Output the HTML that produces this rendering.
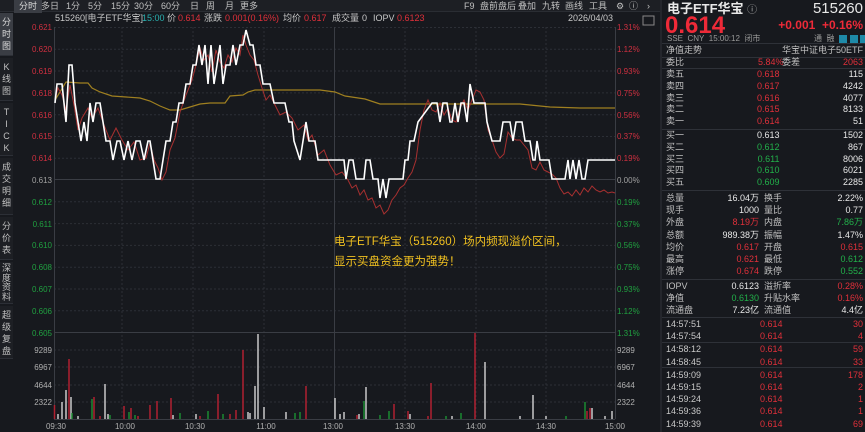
<!DOCTYPE html>
<html><head><meta charset="utf-8"><style>
*{margin:0;padding:0;box-sizing:border-box}
body{width:865px;height:432px;background:#17191e;overflow:hidden;position:relative;font-family:"Liberation Sans","Noto Sans CJK SC",sans-serif;color:#c8c8c8;line-height:1.2}
.a{position:absolute;white-space:nowrap}
.r{color:#e0303a}.g{color:#22b04a}.w{color:#e8e8e8}.gr{color:#9a9a9a}
#side div{position:absolute;left:0;width:13px;background:#1d1f24;border-bottom:1px solid #2c2f36;font-size:9px;line-height:12px;text-align:center;color:#c0c0c0;padding-top:3px;overflow:hidden}
#tb span{position:absolute;top:1px;font-size:9px;color:#c0c0c0}
#rp{position:absolute;left:662px;top:0;width:203px;height:432px;font-size:9px}
.ln{position:absolute;left:662px;width:203px;height:1px;background:#2e3138}
</style></head><body>
<div class="a" style="left:0;top:0;width:660px;height:12px;background:#1d1f24;border-bottom:1px solid #2a2d33"></div>
<div id="tb">
<span style="left:14px;top:0;background:#3a3d44;padding:1px 5px;color:#ddd">分时</span>
<span style="left:41px">多日</span><span style="left:66px">1分</span><span style="left:88px">5分</span><span style="left:111px">15分</span><span style="left:134px">30分</span><span style="left:161px">60分</span><span style="left:190px">日</span><span style="left:206px">周</span><span style="left:225px">月</span><span style="left:240px">更多</span>
<span style="left:464px">F9</span><span style="left:480px">盘前盘后</span><span style="left:518px">叠加</span><span style="left:542px">九转</span><span style="left:565px">画线</span><span style="left:589px">工具</span><span style="left:616px">⚙</span><span style="left:629px">ⓘ</span><span style="left:647px">›</span>
</div>
<div id="side">
<div style="top:13px;height:43px;background:#3a3d44;color:#ddd">分<br>时<br>图</div>
<div style="top:58px;height:43px">K<br>线<br>图</div>
<div style="top:103px;height:53px">T<br>I<br>C<br>K</div>
<div style="top:158px;height:57px">成<br>交<br>明<br>细</div>
<div style="top:217px;height:43px">分<br>价<br>表</div>
<div style="top:262px;height:42px;line-height:9.5px;padding-top:2px">深<br>度<br>资<br>料</div>
<div style="top:306px;height:53px">超<br>级<br>复<br>盘</div>
</div>
<svg class="a" style="left:0;top:0" width="660" height="432" font-family="Liberation Sans,Noto Sans CJK SC,sans-serif">
<g font-size="9">
<text x="55" y="21" fill="#c8c8c8">515260[电子ETF华宝]</text>
<text x="142" y="21" fill="#2ab0b0">15:00</text>
<text x="167" y="21" fill="#c8c8c8">价</text><text x="178" y="21" fill="#e0303a">0.614</text>
<text x="204" y="21" fill="#c8c8c8">涨跌</text><text x="225" y="21" fill="#e0303a">0.001(0.16%)</text>
<text x="283" y="21" fill="#c8c8c8">均价</text><text x="304" y="21" fill="#e0303a">0.617</text>
<text x="332" y="21" fill="#c8c8c8">成交量</text><text x="362" y="21" fill="#c8c8c8">0</text>
<text x="373" y="21" fill="#c8c8c8">IOPV</text><text x="397" y="21" fill="#e0303a">0.6123</text>
<text x="613" y="21" fill="#c8c8c8" text-anchor="end">2026/04/03</text>
</g>
<rect x="643" y="16" width="11" height="9" fill="none" stroke="#888" stroke-width="1"/>
<g stroke="#2c2f36" stroke-dasharray="2,2" stroke-width="1">
<line x1="54" x2="615" y1="27.5" y2="27.5"/><line x1="54" x2="615" y1="49.3" y2="49.3"/><line x1="54" x2="615" y1="71" y2="71"/><line x1="54" x2="615" y1="92.9" y2="92.9"/><line x1="54" x2="615" y1="114.7" y2="114.7"/><line x1="54" x2="615" y1="136.5" y2="136.5"/><line x1="54" x2="615" y1="158.2" y2="158.2"/>
<line x1="54" x2="615" y1="201.8" y2="201.8"/><line x1="54" x2="615" y1="223.6" y2="223.6"/><line x1="54" x2="615" y1="245.4" y2="245.4"/><line x1="54" x2="615" y1="267.2" y2="267.2"/><line x1="54" x2="615" y1="289" y2="289"/><line x1="54" x2="615" y1="310.8" y2="310.8"/>
<line x1="54" x2="615" y1="350" y2="350"/><line x1="54" x2="615" y1="367" y2="367"/><line x1="54" x2="615" y1="385" y2="385"/><line x1="54" x2="615" y1="402" y2="402"/>
<line x1="122" x2="122" y1="27" y2="419"/><line x1="193" x2="193" y1="27" y2="419"/><line x1="264" x2="264" y1="27" y2="419"/><line x1="405" x2="405" y1="27" y2="419"/><line x1="476" x2="476" y1="27" y2="419"/><line x1="546" x2="546" y1="27" y2="419"/>
</g>
<g stroke="#3a3d44" stroke-width="1">
<line x1="54" x2="615" y1="179.5" y2="179.5"/><line x1="54" x2="615" y1="332.5" y2="332.5"/>
<line x1="334.5" x2="334.5" y1="27" y2="419"/><line x1="54.5" x2="54.5" y1="27" y2="419"/><line x1="615.5" x2="615.5" y1="27" y2="419"/>
<line x1="54" x2="615" y1="419.5" y2="419.5"/>
</g>
<g font-size="8" text-anchor="end">
<text x="52" y="30" fill="#d03040">0.621</text><text x="52" y="52" fill="#d03040">0.620</text><text x="52" y="74" fill="#d03040">0.619</text><text x="52" y="96" fill="#d03040">0.618</text><text x="52" y="118" fill="#d03040">0.616</text><text x="52" y="139" fill="#d03040">0.615</text><text x="52" y="161" fill="#d03040">0.614</text><text x="52" y="183" fill="#a0a0a0">0.613</text>
<text x="52" y="205" fill="#20a040">0.612</text><text x="52" y="227" fill="#20a040">0.611</text><text x="52" y="248" fill="#20a040">0.610</text><text x="52" y="270" fill="#20a040">0.608</text><text x="52" y="292" fill="#20a040">0.607</text><text x="52" y="314" fill="#20a040">0.606</text><text x="52" y="336" fill="#20a040">0.605</text>
<text x="52" y="353" fill="#b0b0b0">9289</text><text x="52" y="370" fill="#b0b0b0">6967</text><text x="52" y="388" fill="#b0b0b0">4644</text><text x="52" y="405" fill="#b0b0b0">2322</text>
</g>
<g font-size="8">
<text x="617" y="30" fill="#d03040">1.31%</text><text x="617" y="52" fill="#d03040">1.12%</text><text x="617" y="74" fill="#d03040">0.93%</text><text x="617" y="96" fill="#d03040">0.75%</text><text x="617" y="118" fill="#d03040">0.56%</text><text x="617" y="139" fill="#d03040">0.37%</text><text x="617" y="161" fill="#d03040">0.19%</text><text x="617" y="183" fill="#a0a0a0">0.00%</text>
<text x="617" y="205" fill="#20a040">0.19%</text><text x="617" y="227" fill="#20a040">0.37%</text><text x="617" y="248" fill="#20a040">0.56%</text><text x="617" y="270" fill="#20a040">0.75%</text><text x="617" y="292" fill="#20a040">0.93%</text><text x="617" y="314" fill="#20a040">1.12%</text><text x="617" y="336" fill="#20a040">1.31%</text>
<text x="617" y="353" fill="#b0b0b0">9289</text><text x="617" y="370" fill="#b0b0b0">6967</text><text x="617" y="388" fill="#b0b0b0">4644</text><text x="617" y="405" fill="#b0b0b0">2322</text>
</g>
<g font-size="8" fill="#b0b0b0" text-anchor="middle">
<text x="56" y="429">09:30</text><text x="125" y="429">10:00</text><text x="195" y="429">10:30</text><text x="266" y="429">11:00</text><text x="333" y="429">13:00</text><text x="405" y="429">13:30</text><text x="476" y="429">14:00</text><text x="546" y="429">14:30</text><text x="615" y="429">15:00</text>
</g>
<polyline fill="none" stroke="#a08020" stroke-width="1.2" points="55,100 60,92 66,82 80,83 88,83 92,88 100,92 112,96 140,98 150,101 160,106 170,110 180,110 190,107 200,104 210,103 225,103 230,96 243,95 248,92 255,90 300,90 320,90 335,92 345,96 365,99 380,104 410,104 420,104 480,104 520,104 550,107 580,108 615,108"/>
<polyline fill="none" stroke="#a83030" stroke-width="1" points="55,100 58,88 62,95 66,110 70,85 74,105 78,130 82,118 88,108 92,118 98,108 104,125 110,140 116,128 122,140 128,150 134,142 140,160 146,158 150,143 154,160 158,168 162,180 166,172 170,150 175,138 180,112 186,95 192,80 196,65 200,48 204,60 208,55 212,72 216,50 220,62 224,68 228,55 232,62 236,48 240,55 243,35 246,45 250,55 254,60 258,75 262,88 266,100 270,95 275,105 280,115 286,112 292,118 298,130 304,125 308,140 312,135 318,155 324,150 330,165 336,175 342,172 348,180 352,188 356,185 360,195 364,190 368,200 372,198 376,208 380,205 384,214 388,210 392,200 396,195 400,188 404,185 408,178 412,172 416,160 420,130 424,110 428,100 432,110 436,112 440,103 444,115 448,108 452,120 456,122 460,108 464,100 468,110 472,100 476,90 480,92 484,100 488,130 492,140 496,152 500,158 504,154 508,132 512,138 516,140 520,140 524,145 528,150 532,168 536,170 540,162 544,170 548,172 552,174 556,178 560,188 564,194 568,192 572,196 576,190 580,195 584,188 588,192 592,186 596,190 600,192 604,190 608,193 612,192 615,193"/>
<polyline fill="none" stroke="#ffffff" stroke-width="1.6" stroke-linejoin="miter" points="55,103 57,84 62,84 64,103 66,122 69,65 72,65 75,103 78,122 81,141 84,122 87,141 90,103 93,122 96,103 100,103 103,122 106,141 110,141 113,160 117,141 120,141 124,160 128,141 132,160 136,141 140,141 144,160 148,141 150,141 153,160 156,179 160,179 163,160 166,141 170,141 173,122 176,122 179,103 183,103 186,84 190,84 193,65 196,65 199,45 202,65 205,45 208,84 211,45 214,84 217,65 220,45 223,84 226,65 230,65 233,45 236,65 240,45 243,45 246,30 250,45 253,45 256,65 260,65 263,84 270,84 274,103 285,103 289,122 292,122 294,141 300,160 303,141 306,122 309,141 315,141 318,160 320,160 322,160 330,160 335,160 344,160 346,179 349,160 353,160 356,179 364,179 366,160 370,160 373,179 378,179 380,198 383,179 386,198 389,179 403,179 405,160 408,160 410,141 414,141 418,122 432,103 437,103 440,122 443,103 447,103 450,122 452,122 455,103 458,122 461,103 464,103 467,122 470,84 474,103 485,103 487,122 492,141 500,141 503,122 510,122 513,141 516,122 522,122 525,141 530,141 533,160 535,160 537,141 540,160 545,160 549,160 552,179 565,179 568,160 570,179 573,160 576,179 579,160 582,179 585,179 588,160 615,160"/>
<g stroke-width="1.5">
<g stroke="#b02030"><line x1="54.5" x2="54.5" y1="419" y2="405"/><line x1="69" x2="69" y1="419" y2="359"/><line x1="94" x2="94" y1="419" y2="397"/><line x1="124" x2="124" y1="419" y2="406"/><line x1="131" x2="131" y1="419" y2="408"/><line x1="150" x2="150" y1="419" y2="405"/><line x1="157" x2="157" y1="419" y2="401"/><line x1="171" x2="171" y1="419" y2="398"/><line x1="218" x2="218" y1="419" y2="394"/><line x1="236" x2="236" y1="419" y2="410"/><line x1="243" x2="243" y1="419" y2="350"/><line x1="306" x2="306" y1="419" y2="386"/><line x1="394" x2="394" y1="419" y2="404"/><line x1="408" x2="408" y1="419" y2="411"/><line x1="431" x2="431" y1="419" y2="383"/><line x1="475" x2="475" y1="419" y2="333"/><line x1="587" x2="587" y1="419" y2="411"/><line x1="590" x2="590" y1="419" y2="408"/><line x1="100" x2="100" y1="419" y2="416"/><line x1="138" x2="138" y1="419" y2="416"/><line x1="200" x2="200" y1="419" y2="416"/><line x1="230" x2="230" y1="419" y2="414"/><line x1="357" x2="357" y1="419" y2="415"/><line x1="428" x2="428" y1="419" y2="416"/></g>
<g stroke="#c8c8c8"><line x1="58" x2="58" y1="419" y2="414"/><line x1="62" x2="62" y1="419" y2="402"/><line x1="66" x2="66" y1="419" y2="390"/><line x1="71" x2="71" y1="419" y2="397"/><line x1="78" x2="78" y1="419" y2="416"/><line x1="105" x2="105" y1="419" y2="384"/><line x1="108" x2="108" y1="419" y2="414"/><line x1="173" x2="173" y1="419" y2="415"/><line x1="196" x2="196" y1="419" y2="414"/><line x1="248" x2="248" y1="419" y2="412"/><line x1="250" x2="250" y1="419" y2="413"/><line x1="255" x2="255" y1="419" y2="386"/><line x1="258" x2="258" y1="419" y2="334"/><line x1="264" x2="264" y1="419" y2="407"/><line x1="286" x2="286" y1="419" y2="412"/><line x1="335" x2="335" y1="419" y2="398"/><line x1="340" x2="340" y1="419" y2="414"/><line x1="344" x2="344" y1="419" y2="412"/><line x1="359" x2="359" y1="419" y2="414"/><line x1="366" x2="366" y1="419" y2="387"/><line x1="410" x2="410" y1="419" y2="414"/><line x1="452" x2="452" y1="419" y2="416"/><line x1="485" x2="485" y1="419" y2="362"/><line x1="533" x2="533" y1="419" y2="395"/><line x1="520" x2="520" y1="419" y2="416"/><line x1="546" x2="546" y1="419" y2="416"/><line x1="592" x2="592" y1="419" y2="408"/><line x1="605" x2="605" y1="419" y2="416"/><line x1="612" x2="612" y1="419" y2="411"/></g>
<g stroke="#1a8a30"><line x1="72" x2="72" y1="419" y2="413"/><line x1="92" x2="92" y1="419" y2="399"/><line x1="110" x2="110" y1="419" y2="415"/><line x1="129" x2="129" y1="419" y2="412"/><line x1="135" x2="135" y1="419" y2="415"/><line x1="180" x2="180" y1="419" y2="413"/><line x1="208" x2="208" y1="419" y2="411"/><line x1="223" x2="223" y1="419" y2="414"/><line x1="295" x2="295" y1="419" y2="413"/><line x1="300" x2="300" y1="419" y2="412"/><line x1="364" x2="364" y1="419" y2="401"/><line x1="380" x2="380" y1="419" y2="415"/><line x1="389" x2="389" y1="419" y2="411"/><line x1="446" x2="446" y1="419" y2="416"/><line x1="461" x2="461" y1="419" y2="413"/><line x1="566" x2="566" y1="419" y2="416"/><line x1="585" x2="585" y1="419" y2="402"/></g>
</g>
<g font-size="11.5" fill="#f0c020"><text x="334" y="245">电子ETF华宝（515260）场内频现溢价区间，</text><text x="334" y="265">显示买盘资金更为强势！</text></g>
</svg>
<div class="a" style="left:660px;top:0;width:2px;height:432px;background:#24262c"></div>
<div id="rp">
<div class="a w" style="left:5px;top:2px;font-size:13px;line-height:14px;font-weight:bold">电子ETF华宝 <span style="font-weight:normal;font-size:10px;color:#aaa">ⓘ</span></div>
<div class="a w" style="right:2px;top:1px;font-size:15px;line-height:16px">515260</div>
<div class="a" style="left:3px;top:17px;font-size:24px;line-height:18px;font-weight:bold;color:#ee2a38">0.614</div>
<div class="a" style="right:2px;top:18px;font-size:12px;line-height:14px;font-weight:bold;color:#ee2a38">+0.001&nbsp; +0.16%</div>
<div class="a gr" style="left:5px;top:34px;font-size:8px;line-height:9px">SSE&nbsp; CNY&nbsp; 15:00:12&nbsp; 闭市</div>
<div class="a gr" style="left:152px;top:34px;font-size:8px;line-height:9px">通&nbsp; 融</div>
<div class="a" style="left:177px;top:35px;width:8px;height:8px;background:#1e8aa8"></div><div class="a" style="left:188px;top:35px;width:8px;height:8px;background:#1e8aa8"></div><div class="a" style="left:198px;top:35px;width:8px;height:8px;background:#1e8aa8"></div>
</div>
<div class="ln" style="top:43px"></div>
<div class="a gr" style="left:666px;top:45px;font-size:9px;color:#c0c0c0">净值走势</div><div class="a" style="right:2px;top:45px;font-size:9px;color:#c0c0c0">华宝中证电子50ETF</div>
<div class="ln" style="top:57px"></div>
<div class="a" style="left:666px;top:57px;width:199px;font-size:9px;line-height:11px"><span style="color:#c0c0c0">委比</span><span class="a r" style="left:92px">5.84%</span><span class="a" style="left:116px;color:#c0c0c0">委差</span><span class="a r" style="right:2px">2063</span></div>
<div class="ln" style="top:68px"></div>
<div class="a" style="left:666px;top:69px;width:199px;font-size:9px;line-height:11.8px;color:#c0c0c0">
卖五<br>卖四<br>卖三<br>卖二<br>卖一</div>
<div class="a r" style="left:757px;top:69px;font-size:9px;line-height:11.8px;text-align:right">0.618<br>0.617<br>0.616<br>0.615<br>0.614</div>
<div class="a w" style="right:2px;top:69px;font-size:9px;line-height:11.8px;text-align:right">115<br>4242<br>4077<br>8133<br>51</div>
<div class="ln" style="top:129px"></div>
<div class="a" style="left:666px;top:130px;font-size:9px;line-height:11.8px;color:#c0c0c0">买一<br>买二<br>买三<br>买四<br>买五</div>
<div class="a" style="left:757px;top:130px;font-size:9px;line-height:11.8px;text-align:right"><span class="w">0.613</span><br><span class="g">0.612<br>0.611<br>0.610<br>0.609</span></div>
<div class="a w" style="right:2px;top:130px;font-size:9px;line-height:11.8px;text-align:right">1502<br>867<br>8006<br>6021<br>2285</div>
<div class="ln" style="top:190px"></div>
<div class="a" style="left:666px;top:192px;font-size:9px;line-height:12.2px;color:#c0c0c0">总量<br>现手<br>外盘<br>总额<br>均价<br>最高<br>涨停</div>
<div class="a" style="right:106px;top:192px;font-size:9px;line-height:12.2px;text-align:right"><span class="w">16.04万<br>1000</span><br><span class="r">8.19万</span><br><span class="w">989.38万</span><br><span class="r">0.617<br>0.621<br>0.674</span></div>
<div class="a" style="left:764px;top:192px;font-size:9px;line-height:12.2px;color:#c0c0c0">换手<br>量比<br>内盘<br>振幅<br>开盘<br>最低<br>跌停</div>
<div class="a" style="right:2px;top:192px;font-size:9px;line-height:12.2px;text-align:right"><span class="w">2.22%<br>0.77</span><br><span class="g">7.86万</span><br><span class="w">1.47%</span><br><span class="r">0.615</span><br><span class="g">0.612<br>0.552</span></div>
<div class="ln" style="top:279px"></div>
<div class="a" style="left:666px;top:280px;font-size:9px;line-height:12.2px;color:#c0c0c0">IOPV<br>净值<br>流通盘</div>
<div class="a" style="right:106px;top:280px;font-size:9px;line-height:12.2px;text-align:right"><span class="w">0.6123</span><br><span class="g">0.6130</span><br><span class="w">7.23亿</span></div>
<div class="a" style="left:764px;top:280px;font-size:9px;line-height:12.2px;color:#c0c0c0">溢折率<br>升贴水率<br>流通值</div>
<div class="a" style="right:2px;top:280px;font-size:9px;line-height:12.2px;text-align:right"><span class="r">0.28%<br>0.16%</span><br><span class="w">4.4亿</span></div>
<div class="ln" style="top:317px"></div>
<div class="a" style="left:666px;top:318px;font-size:9px;line-height:12.2px;color:#c8c8c8">14:57:51<br>14:57:54<br><span style="display:block;height:1px"></span>14:58:12<br>14:58:45<br><span style="display:block;height:1px"></span>14:59:09<br>14:59:15<br>14:59:24<br>14:59:36<br>14:59:39</div>
<div class="a r" style="left:760px;top:318px;font-size:9px;line-height:12.2px">0.614<br>0.614<br><span style="display:block;height:1px"></span>0.614<br>0.614<br><span style="display:block;height:1px"></span>0.614<br>0.614<br>0.614<br>0.614<br>0.614</div>
<div class="a r" style="right:2px;top:318px;font-size:9px;line-height:12.2px;text-align:right">30<br>4<br><span style="display:block;height:1px"></span>59<br>33<br><span style="display:block;height:1px"></span>178<br>2<br>1<br>1<br>69</div>
<div class="ln" style="top:342px"></div><div class="ln" style="top:367px"></div>
</body></html>
